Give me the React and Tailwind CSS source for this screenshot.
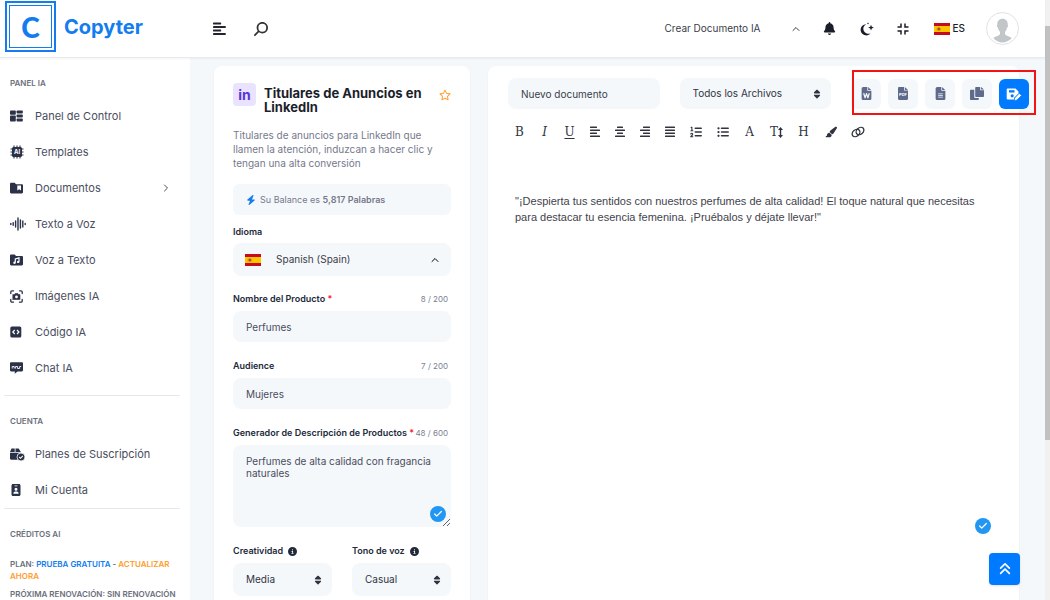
import { useState } from 'react'
import {
  FaAnglesUp, FaBell, FaBolt, FaCircleInfo, FaFileLines, FaFileWord, FaIdBadge, FaListOl, FaListUl,
  FaMagnifyingGlass, FaPaintbrush, FaRegStar, FaSort,
} from 'react-icons/fa6'
import { Check, ChevronRight, ChevronUp } from 'lucide-react'

function Lines({ rows, className = 'size-3' }) {
  return (
    <svg viewBox="0 0 12 12" className={className} fill="currentColor" aria-hidden="true">
      {rows.map(([x, w], i) => <rect key={i} x={x} y={0.5 + i * 3} width={w} height="1.6" rx="0.4" />)}
    </svg>
  )
}

function SpainFlag({ className }) {
  return (
    <svg viewBox="0 0 16 12" className={className} preserveAspectRatio="none" aria-hidden="true">
      <rect width="16" height="12" fill="#c60b1e" />
      <rect y="3" width="16" height="6" fill="#ffc400" />
      <rect x="3.6" y="4.4" width="2.4" height="3.2" rx="0.8" fill="#b0492b" />
      <path d="M3 5v2.6M6.6 5v2.6" stroke="#9a7b3f" strokeWidth="0.5" />
    </svg>
  )
}

const DashboardIcon = () => (
  <svg viewBox="0 0 13 12" className="h-3 w-[13px]" fill="currentColor">
    <rect y="0.5" width="5.8" height="4.2" rx="0.8" /><rect x="6.6" y="0.5" width="6.2" height="3.1" rx="0.8" />
    <rect y="5.5" width="5.8" height="6" rx="0.8" /><rect x="6.6" y="4.4" width="6.2" height="3.1" rx="0.8" />
    <rect x="6.6" y="8.4" width="6.2" height="3.1" rx="0.8" />
  </svg>
)

const ChipIcon = () => (
  <svg viewBox="0 0 14 14" className="size-[14px]" fill="currentColor">
    <path d="M4 .5v13M7 .5v13M10 .5v13M.5 4h13M.5 7h13M.5 10h13" stroke="currentColor" strokeWidth="1.1" />
    <rect x="2" y="2" width="10" height="10" rx="1.5" />
    <text x="7" y="9.2" fontSize="6" fontWeight="700" textAnchor="middle" fill="#fff">AI</text>
  </svg>
)

const FolderBookmarkIcon = () => (
  <svg viewBox="0 0 13 12" className="h-3 w-[13px]">
    <path d="M1.2.8h3.5L6 2.2h5.8c.7 0 1.2.5 1.2 1.2v6.8c0 .7-.5 1.2-1.2 1.2H1.2C.5 11.4 0 10.9 0 10.2V2C0 1.3.5.8 1.2.8z" fill="currentColor" />
    <path d="M7.3 3.4H11v5.2L9.15 7.2 7.3 8.6z" fill="#fff" />
  </svg>
)

const WaveIcon = () => (
  <svg viewBox="0 0 16 14" className="h-[14px] w-4" fill="none" stroke="currentColor" strokeWidth="1.4" strokeLinecap="round">
    <path d="M.8 6.5v1M3.2 5.8v2.4M5.6 4v6M8 1v12M10.400 3v8M12.800 4v6M15.200 6.500v1" />
  </svg>
)

const FolderMusicIcon = () => (
  <svg viewBox="0 0 13 12" className="h-3 w-[13px]">
    <path d="M1.2.5h3.5L6 2h5.8c.7 0 1.2.5 1.2 1.2v7c0 .7-.5 1.2-1.2 1.2H1.2C.5 11.4 0 10.9 0 10.2V1.7C0 1 .5.5 1.2.5z" fill="currentColor" />
    <path d="M5.3 8.6V4.900l3.700-1v3.900" fill="none" stroke="#fff" strokeWidth="1.200" />
    <circle cx="4.500" cy="8.700" r="1.200" fill="#fff" /><circle cx="8.200" cy="7.900" r="1.200" fill="#fff" />
  </svg>
)

const CameraIcon = () => (
  <svg viewBox="0 0 13 13" className="size-[13px]" fill="none" stroke="currentColor" strokeWidth="1.3" strokeLinecap="round">
    <path d="M.8 3.5V2C.8 1.3 1.3.8 2 .8h1.500M9.500.8H11c.7 0 1.200.5 1.200 1.200v1.500M12.200 9.500V11c0 .7-.5 1.200-1.200 1.200H9.500M3.500 12.200H2c-.7 0-1.200-.5-1.200-1.200V9.500" />
    <path d="M3 4.600h1.500l.7-1.100h2.600l.7 1.100H10v4.900H3z" fill="currentColor" strokeWidth="0.6" />
    <circle cx="6.500" cy="6.900" r="1.400" fill="#fff" stroke="none" />
  </svg>
)

const CodeIcon = () => (
  <svg viewBox="0 0 12 12" className="size-3">
    <rect x="0.3" y="0.5" width="11" height="11" rx="1.5" fill="currentColor" />
    <path d="M4.700 4 2.800 6l1.900 2M7 4l1.900 2L7 8" fill="none" stroke="#fff" strokeWidth="1.200" />
  </svg>
)

const ChatIcon = () => (
  <svg viewBox="0 0 13 12" className="h-3 w-[13px]">
    <path d="M1.2.3h10.600c.7 0 1.200.5 1.200 1.200v6.800c0 .7-.5 1.200-1.200 1.200H7.500L4.800 11.800V9.500H1.200C.5 9.500 0 9 0 8.300V1.500C0 .8.500.3 1.200.3z" fill="currentColor" />
    <path d="M2.200 6.500V4.500h2v2M5.600 6.500v-2h2v2h2v-2h1.500" fill="none" stroke="#fff" strokeWidth="0.9" />
  </svg>
)

const PlansIcon = () => (
  <svg viewBox="0 0 15 13" className="h-[13px] w-[15px]">
    <path d="M1.500.5h3.200V4H0zM5.500.5h3.200L10.800 4H5.500z" fill="currentColor" />
    <path d="M0 4.800h11v7H1.200C.5 11.800 0 11.300 0 10.600z" fill="currentColor" />
    <circle cx="11" cy="9" r="4" fill="currentColor" stroke="#fff" strokeWidth="0.8" />
    <path d="m9.200 9 1.300 1.300 2.300-2.400" fill="none" stroke="#fff" strokeWidth="1.100" />
  </svg>
)

const MoonIcon = () => (
  <svg viewBox="0 0 14 14" className="size-[14px]" fill="currentColor">
    <path d="M6.200 2.200A5.600 5.600 0 1 0 10.600 11.300 4.700 4.700 0 0 1 6.200 2.200z" />
    <path d="m11 2.800.8 2 2 .8-2 .8-.8 2-.8-2-2-.8 2-.8zM8 .3l.3.800.8.300-.8.300L8 2.500l-.3-.8-.8-.3.8-.3z" />
  </svg>
)

const CompressIcon = () => (
  <svg viewBox="0 0 12 12" className="size-3" fill="none" stroke="currentColor" strokeWidth="1.500">
    <path d="M4 .5V4H.5M8 .5V4h3.500M4 11.500V8H.5M8 11.500V8h3.500" />
  </svg>
)

const PdfIcon = () => (
  <svg viewBox="0 0 10 13" className="h-[13px] w-[10px]">
    <path d="M1.200 0H6v3.500h4v8.300c0 .7-.5 1.200-1.200 1.200H1.200C.5 13 0 12.500 0 11.800V1.200C0 .5.500 0 1.200 0zM6.800 0 10 2.900H6.800z" fill="currentColor" />
    <text x="5" y="9" fontSize="4" fontWeight="700" textAnchor="middle" fill="#fff">PDF</text>
  </svg>
)

const CopyIcon = () => (
  <svg viewBox="0 0 14 13" className="h-[13px] w-[14px]" fill="currentColor">
    <path d="M6.200 0h4v3.200H14V9c0 .6-.4 1-1 1H6.200c-.6 0-1-.4-1-1V1c0-.6.4-1 1-1zM11 0l3 2.500h-3z" />
    <path d="M1 2.800h3.300V10c0 .6.400 1 1 1h3.500v1c0 .6-.4 1-1 1H1c-.6 0-1-.4-1-1V3.800c0-.6.400-1 1-1z" />
  </svg>
)

const SaveIcon = () => (
  <svg viewBox="0 0 16 14" className="h-[14px] w-4">
    <path d="M2 1.500h7.500L12.500 4.500v2L8 11v1.500H2c-.8 0-1.300-.5-1.300-1.300V2.800C.7 2 1.200 1.500 2 1.500z" fill="#fff" />
    <path d="M3 3.200h5.500v2.300H3z" fill="#007bff" />
    <circle cx="6.200" cy="8.800" r="1.600" fill="#007bff" />
    <path d="m8.700 11 4.500-4.700 2.300 2.200-4.600 4.600-2.700.6z" fill="#fff" stroke="#007bff" strokeWidth="0.700" />
  </svg>
)

const TextHeightIcon = () => (
  <>
    T
    <svg viewBox="0 0 5 11" className="h-[11px] w-[5px]" fill="currentColor">
      <path d="M2.500 0 5 3H3.200v5H5L2.500 11 0 8h1.800V3H0z" />
    </svg>
  </>
)

const LinkIcon = () => (
  <svg viewBox="0 0 14 12" className="h-3 w-[14px]" fill="none" stroke="currentColor" strokeWidth="1.300">
    <ellipse cx="5" cy="7" rx="4.300" ry="3.200" transform="rotate(-40 5 7)" />
    <ellipse cx="9" cy="5" rx="4.300" ry="3.200" transform="rotate(-40 9 5)" />
  </svg>
)

const panelItems = [
  { label: 'Panel de Control', icon: DashboardIcon },
  { label: 'Templates', icon: ChipIcon },
  { label: 'Documentos', icon: FolderBookmarkIcon, more: true },
  { label: 'Texto a Voz', icon: WaveIcon },
  { label: 'Voz a Texto', icon: FolderMusicIcon },
  { label: 'Imágenes IA', icon: CameraIcon },
  { label: 'Código IA', icon: CodeIcon },
  { label: 'Chat IA', icon: ChatIcon },
]

const accountItems = [
  { label: 'Planes de Suscripción', icon: PlansIcon },
  { label: 'Mi Cuenta', icon: FaIdBadge },
]

const formatTools = [
  { name: 'Negrita', icon: 'B' },
  { name: 'Cursiva', icon: <i>I</i> },
  { name: 'Subrayado', icon: <u className="underline-offset-2">U</u> },
  { name: 'Alinear a la izquierda', icon: <Lines rows={[[1, 7], [1, 10], [1, 7], [1, 10]]} /> },
  { name: 'Centrar', icon: <Lines rows={[[3, 6], [1, 10], [3, 6], [1, 10]]} /> },
  { name: 'Alinear a la derecha', icon: <Lines rows={[[4, 7], [1, 10], [4, 7], [1, 10]]} /> },
  { name: 'Justificar', icon: <Lines rows={[[1, 10], [1, 10], [1, 10], [1, 10]]} /> },
]

const styleTools = [
  { name: 'Lista numerada', icon: <FaListOl /> },
  { name: 'Lista', icon: <FaListUl /> },
  { name: 'Fuente', icon: 'A' },
  { name: 'Tamaño', icon: <TextHeightIcon /> },
  { name: 'Encabezado', icon: 'H' },
  { name: 'Color', icon: <FaPaintbrush /> },
  { name: 'Enlace', icon: <LinkIcon /> },
]

const exportTools = [
  { name: 'Word', icon: <FaFileWord /> },
  { name: 'PDF', icon: <PdfIcon /> },
  { name: 'Texto', icon: <FaFileLines /> },
  { name: 'Copiar', icon: <CopyIcon /> },
]

function NavHeading({ children }) {
  return <h2 className="mt-[17px] mb-[7px] pl-[10px] text-[8px] font-semibold leading-4 text-[#6b6f7b]">{children}</h2>
}

function NavList({ items }) {
  return (
    <ul>
      {items.map(({ label, icon: Icon, more }) => (
        <li key={label}>
          <a href="#" className="flex h-9 items-center pl-[10px] pr-[18px] text-[11px] text-[#4a4d5e]">
            <span className="flex w-[25px] text-xs text-[#2b3248]"><Icon /></span>
            {label}
            {more && <ChevronRight className="ml-auto size-3" />}
          </a>
        </li>
      ))}
    </ul>
  )
}

function Field({ id, label, count, value, onChange }) {
  return (
    <div className="mb-4">
      <div className="mb-1 flex h-4 items-center justify-between">
        <label htmlFor={id} className="font-semibold text-[#222a3a]">
          {label}
        </label>
        <span className="pr-[3px] text-[8px] text-[#7b8191]">{count}</span>
      </div>
      <input id={id} value={value} onChange={e => onChange(e.target.value)}
        className="block h-[31px] w-full rounded-lg bg-[#f5f8fb] px-[13px] text-[10px] text-[#4a4d5e]" />
    </div>
  )
}

function SelectBox({ id, options, className = '', ...rest }) {
  return (
    <div className={`relative ${className}`}>
      <select id={id} {...rest} className="h-full w-full appearance-none rounded-lg bg-[#f5f8fb] px-[13px] text-[10px] text-[#30343f]">
        {options.map(o => <option key={o}>{o}</option>)}
      </select>
      <FaSort className="pointer-events-none absolute inset-y-0 right-[9px] my-auto size-[10px] text-[#30343f]" />
    </div>
  )
}

function CheckBadge({ className = '' }) {
  return (
    <span className={`flex size-4 items-center justify-center rounded-full bg-[#2196f3] text-white ${className}`}>
      <Check className="size-[10px]" strokeWidth={3} />
    </span>
  )
}

export default function App() {
  const [product, setProduct] = useState('Perfumes')
  const [audience, setAudience] = useState('Mujeres')
  const [description, setDescription] = useState('Perfumes de alta calidad con fragancia naturales')
  const [docName, setDocName] = useState('Nuevo documento')

  return (
    <div className="flex h-screen overflow-hidden bg-[#f5f8fb] font-[Inter,sans-serif] text-[9px]">
      <div className="flex min-w-0 flex-1 flex-col">
        <header className="z-10 flex h-[58px] shrink-0 items-center border-b border-[#e6e9ee] bg-white shadow-xs">
          <a href="#" className="mb-1 flex w-[213px] items-center gap-2 pl-[5px] text-[#127cf0]">
            <span className="border-2 border-current p-[2px]">
              <span className="flex size-[43px] items-center justify-center border border-current font-[Lato,sans-serif] text-[28px] font-black">C</span>
            </span>
            <span className="text-[20px] font-bold leading-6">Copyter</span>
          </a>
          <button aria-label="Menú" className="text-[#22252e]"><Lines rows={[[0, 7], [0, 11], [0, 7], [0, 11]]} className="size-[14px]" /></button>
          <button aria-label="Buscar" className="ml-[27px] -scale-x-100 text-sm text-[#333]"><FaMagnifyingGlass /></button>
          <div className="ml-auto flex items-center pr-[26px] text-[#1b1d29]">
            <button className="flex items-center gap-[29px] text-[10px] text-[#3a3d49]">
              Crear Documento IA <ChevronUp className="size-3" />
            </button>
            <button aria-label="Notificaciones" className="ml-[21px] text-[13px]"><FaBell /></button>
            <button aria-label="Modo oscuro" className="ml-6"><MoonIcon /></button>
            <button aria-label="Pantalla completa" className="ml-[23px]"><CompressIcon /></button>
            <button className="ml-[25px] flex items-center gap-[3px] text-[10px] font-medium">
              <SpainFlag className="h-3 w-4" /> ES
            </button>
            <button aria-label="Perfil" className="ml-[21px] size-[33px] overflow-hidden rounded-full border border-[#dfe2e6] bg-white p-px">
              <svg viewBox="0 0 30 30" className="size-full text-[#c3c6c9]" fill="currentColor">
                <path d="M15 5c-3.600 0-5.600 2.500-5.400 6-.7.200-.4 2.300.6 2.900.4 2 1.100 3.400 2.200 4.400v2.600c-1.800 2-5 2-6.900 4C8 28 11.500 29.500 15 29.500S22 28 24.500 24.900c-1.900-2-5.100-2-6.900-4v-2.600c1.100-1 1.800-2.400 2.200-4.400 1-.6 1.300-2.700.6-2.900.2-3.500-1.800-6-5.400-6z" />
              </svg>
            </button>
          </div>
        </header>

        <div className="flex min-h-0 flex-1">
          <aside className="w-[190px] shrink-0 overflow-hidden bg-white">
            <NavHeading>PANEL IA</NavHeading>
            <NavList items={panelItems} />
            <hr className="mt-[9px] mr-[10px] ml-1 border-[#e5e8ec]" />
            <NavHeading>CUENTA</NavHeading>
            <NavList items={accountItems} />
            <hr className="mr-[10px] ml-1 border-[#e5e8ec]" />
            <NavHeading>CRÉDITOS AI</NavHeading>
            <div className="mt-4 pr-3 pl-[10px] text-[8px] font-semibold leading-3 text-[#6b6f7b]">
              <p>PLAN: <span className="text-[#127cf0]">PRUEBA GRATUITA</span> - <a href="#" className="text-[#ff9d2e]">ACTUALIZAR AHORA</a></p>
              <p className="mt-[6px] whitespace-nowrap">PRÓXIMA RENOVACIÓN: SIN RENOVACIÓN</p>
            </div>
          </aside>

          <main className="flex min-w-0 flex-1 gap-[18px] overflow-hidden pt-2 pr-[26px] pl-6">
            <form className="h-[700px] w-64 shrink-0 rounded-lg bg-white px-[19px] pt-[17px] shadow-xs">
              <div className="flex items-start">
                <span className="flex size-[23px] items-center justify-center rounded-sm bg-[#e9e3ff] text-[14px] font-bold text-[#5a36d6]">in</span>
                <h1 className="mt-[3px] ml-2 w-[170px] text-[13px] font-bold leading-[14px] text-[#1c1e2b]">Titulares de Anuncios en LinkedIn</h1>
                <button type="button" aria-label="Favorito" className="mt-[6px] ml-auto text-xs text-[#ff9d2e]"><FaRegStar /></button>
              </div>
              <p className="mt-[14px] text-[10px] leading-[14px] text-[#75798c]">
                Titulares de anuncios para LinkedIn que llamen la atención, induzcan a hacer clic y tengan una alta conversión
              </p>
              <p className="mt-[14px] flex h-[31px] items-center gap-1 rounded-md bg-[#f5f8fb] px-[13px] text-[#75798c]">
                <FaBolt className="size-[10px] text-[#127cf0]" />
                <span>Su Balance es <b className="font-semibold">5,817 Palabras</b></span>
              </p>

              <label htmlFor="language" className="mt-[9px] mb-[3px] block font-semibold leading-4 text-[#222a3a]">Idioma</label>
              <div className="relative mb-[15px] h-[33px]">
                <SpainFlag className="pointer-events-none absolute inset-y-0 left-3 my-auto h-3 w-4" />
                <select id="language" className="h-full w-full appearance-none rounded-lg bg-[#f5f8fb] pl-[43px] text-[10px] text-[#3a3d49]">
                  <option>Spanish (Spain)</option>
                </select>
                <ChevronUp className="pointer-events-none absolute inset-y-0 right-[10px] my-auto size-3" />
              </div>

              <Field id="product" label={<>Nombre del Producto <span className="text-[#f5222d]">*</span></>} count="8 / 200" value={product} onChange={setProduct} />
              <Field id="audience" label="Audience" count="7 / 200" value={audience} onChange={setAudience} />

              <div className="mb-1 flex h-4 items-center justify-between whitespace-nowrap">
                <label htmlFor="description" className="font-semibold text-[#222a3a]">
                  Generador de Descripción de Productos <span className="text-[#f5222d]">*</span>
                </label>
                <span className="pr-[3px] text-[8px] text-[#7b8191]">48 / 600</span>
              </div>
              <div className="relative">
                <textarea id="description" value={description} onChange={e => setDescription(e.target.value)}
                  className="block h-[82px] w-full resize-y rounded-lg bg-[#f5f8fb] px-[13px] py-[10px] text-[10px] leading-3 text-[#4a4d5e]" />
                <CheckBadge className="absolute right-[5px] bottom-[5px]" />
              </div>

              <div className="mt-4 grid grid-cols-2 gap-5">
                <div>
                  <label htmlFor="creativity" className="mb-1 flex h-4 items-center gap-[5px] font-semibold text-[#222a3a]">Creatividad <FaCircleInfo className="size-[9px]" /></label>
                  <SelectBox id="creativity" options={['Media']} className="h-[33px]" />
                </div>
                <div>
                  <label htmlFor="tone" className="mb-1 flex h-4 items-center gap-[5px] font-semibold text-[#222a3a]">Tono de voz <FaCircleInfo className="size-[9px]" /></label>
                  <SelectBox id="tone" options={['Casual']} className="h-[33px]" />
                </div>
              </div>
            </form>

            <section className="h-[700px] min-w-0 flex-1 rounded-lg bg-white px-5 pt-3 shadow-xs">
              <div className="-mr-[30px] grid grid-cols-[1fr_1fr_auto] items-center gap-5">
                <input aria-label="Nombre del documento" value={docName} onChange={e => setDocName(e.target.value)}
                  className="h-[31px] w-full min-w-0 rounded-lg bg-[#f5f8fb] px-[13px] text-[10px] text-[#3a3d49]" />
                <SelectBox aria-label="Archivos" options={['Todos los Archivos']} className="h-[31px] min-w-0" />
                <div className="relative flex gap-[7px]">
                  {exportTools.map(({ name, icon }) => (
                    <button key={name} aria-label={name} className="flex size-[30px] items-center justify-center rounded-md bg-[#f5f8fb] text-[13px] text-[#5f6b8a]">{icon}</button>
                  ))}
                  <button aria-label="Guardar" className="flex size-[30px] items-center justify-center rounded-md bg-[#007bff]"><SaveIcon /></button>
                  <span className="pointer-events-none absolute -top-[9px] -right-[7px] -bottom-[6px] left-px border-2 border-[#f01414]" />
                </div>
              </div>

              <div className="-ml-px mt-[11px] flex h-6 font-['DejaVu_Serif',serif] text-xs text-[#30343f]">
                {formatTools.map(({ name, icon }) => (
                  <button key={name} aria-label={name} className="flex w-[25px] items-center justify-center">{icon}</button>
                ))}
                {styleTools.map(({ name, icon }) => (
                  <button key={name} aria-label={name} className="flex w-[27px] items-center justify-center">{icon}</button>
                ))}
              </div>
              <p className="mt-[49px] px-[7px] font-['Liberation_Sans',sans-serif] text-[11px] leading-4 text-[#3f434c]">
                "¡Despierta tus sentidos con nuestros perfumes de alta calidad! El toque natural que necesitas para destacar tu esencia femenina. ¡Pruébalos y déjate llevar!"
              </p>
            </section>
          </main>
        </div>
      </div>

      <div className="w-[5px] shrink-0 bg-[#f1f1f1]" aria-hidden="true">
        <div className="mt-[26px] h-[69vh] bg-[#c1c1c1]" />
      </div>

      <CheckBadge className="fixed right-[59px] bottom-[66px]" />
      <button aria-label="Subir" className="fixed right-[30px] bottom-[15px] z-10 flex h-8 w-[31px] items-center justify-center rounded-sm bg-[#007bff] text-sm text-white shadow-sm">
        <FaAnglesUp />
      </button>
    </div>
  )
}
